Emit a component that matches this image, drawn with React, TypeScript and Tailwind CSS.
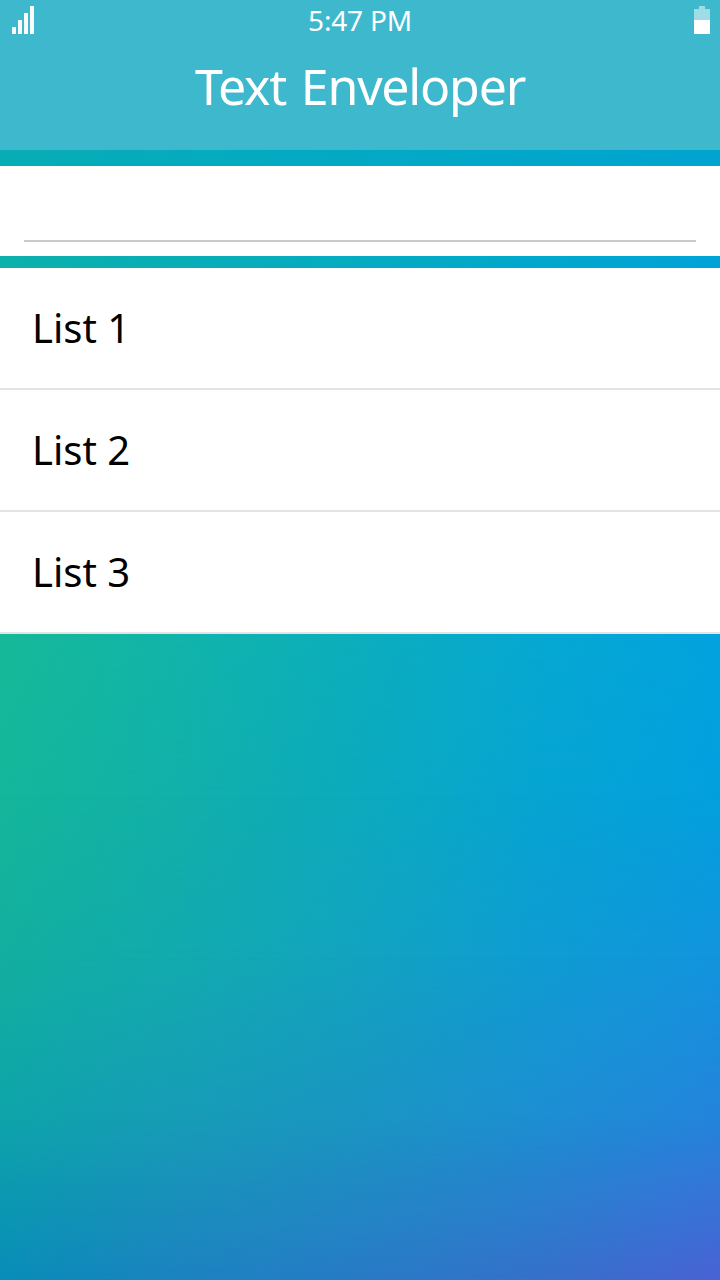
const items = ['List 1', 'List 2', 'List 3'];

function SignalIcon() {
  return (
    <svg width="22" height="28" viewBox="0 0 22 28" fill="#fafafa" shapeRendering="crispEdges">
      <rect x="0" y="21" width="4" height="7" />
      <rect x="6" y="14" width="4" height="14" />
      <rect x="12" y="7" width="4" height="21" />
      <rect x="18" y="0" width="4" height="28" />
    </svg>
  );
}

function BatteryIcon() {
  return (
    <svg width="16" height="28" viewBox="0 0 16 28" shapeRendering="crispEdges">
      <path d="M5 0h6v3h5v11H0V3h5z" fill="#9fdce6" />
      <rect x="0" y="14" width="16" height="14" fill="#fff" />
    </svg>
  );
}

// Each layer is one horizontal colour band; its mask fades it in below the previous one.
function Backdrop() {
  return (
    <div className="grid flex-1 bg-[linear-gradient(90deg,#16b998,#11b4aa_25%,#0caebe_50%,#06a8d2_75%,#02a3df)]">
      <div className="col-start-1 row-start-1 bg-[linear-gradient(90deg,#14b69a,#12b0aa_25%,#0caabe_50%,#06a4d2_75%,#03a0df)] [mask-image:linear-gradient(180deg,transparent,black_25%)]" />
      <div className="col-start-1 row-start-1 bg-[linear-gradient(90deg,#13af9f,#12aaaf_25%,#12a3c0_50%,#0f9cd3_75%,#1294dd)] [mask-image:linear-gradient(180deg,transparent_25%,black_50%)]" />
      <div className="col-start-1 row-start-1 bg-[linear-gradient(90deg,#0ea4aa,#179cb7_25%,#1a95c2_50%,#1d8ed2_75%,#2484dc)] [mask-image:linear-gradient(180deg,transparent_50%,black_75%)]" />
      <div className="col-start-1 row-start-1 bg-[linear-gradient(90deg,#088cb8,#1c82c0_25%,#287ac6_50%,#3670ca_75%,#4a62d4)] [mask-image:linear-gradient(180deg,transparent_75%,black)]" />
    </div>
  );
}

export default function App() {
  return (
    <div className="flex h-[1280px] w-[720px] flex-col overflow-hidden font-['Noto_Sans',sans-serif]">
      <header className="h-[150px] bg-[#3eb8cd] text-white">
        <div className="grid h-10 grid-cols-[1fr_auto_1fr] items-center pr-3 pl-3">
          <SignalIcon />
          <time className="text-[28px] leading-10 tracking-[-0.2px]">5:47 PM</time>
          <div className="-mr-0.5 flex justify-end">
            <BatteryIcon />
          </div>
        </div>
        <h1 className="text-center text-[50px] leading-[92px] tracking-[-1.2px] [word-spacing:3px]">Text Enveloper</h1>
      </header>
      <div className="h-4 bg-linear-to-r from-[#08acb5] to-[#00a4d0] via-[#03a9c4]" />
      <div className="h-[90px] bg-white px-6">
        <input aria-label="Text" className="h-[76px] w-full border-b-2 border-[#cacaca] text-[40px] outline-none" />
      </div>
      <div className="h-3 bg-linear-to-r from-[#0eb0ab] to-[#00a3d7] via-[#05abc1]" />
      <ul className="bg-white text-black">
        {items.map((item) => (
          <li key={item} className="h-[122px] border-b-2 border-[#e4e4e4] px-8 text-[40px] leading-[120px]">
            {item}
          </li>
        ))}
      </ul>
      <Backdrop />
    </div>
  );
}
